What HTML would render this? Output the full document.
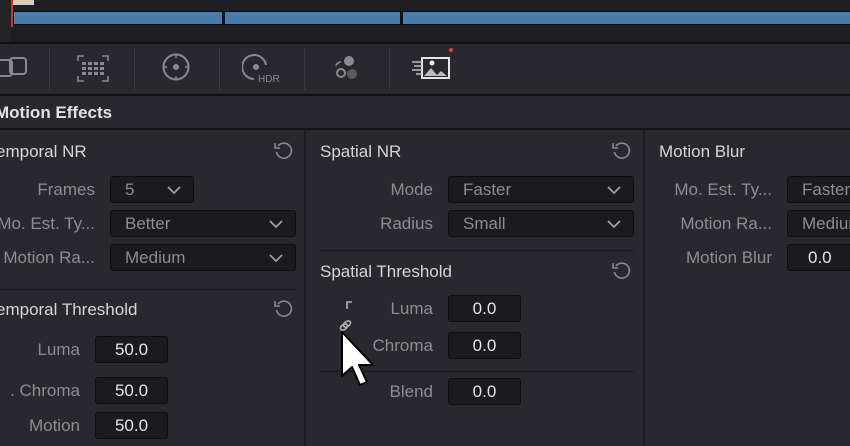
<!DOCTYPE html>
<html><head><meta charset="utf-8"><style>
*{margin:0;padding:0;box-sizing:border-box}
body{width:850px;height:446px;overflow:hidden;background:#28282e;font-family:"Liberation Sans","DejaVu Sans",sans-serif;position:relative}
.a{position:absolute}
.lbl{position:absolute;color:#8d8d91;font-size:17px;text-align:right;white-space:nowrap;line-height:20px}
.ttl{position:absolute;color:#d6d6d8;font-size:17px;white-space:nowrap;line-height:20px}
.box{position:absolute;background:#1b1b1d;border:1px solid #0e0e10;border-radius:3px;color:#8d8d91;font-size:17px;line-height:25px;padding-left:14px;height:27px;white-space:nowrap;overflow:hidden}
.box svg{position:absolute;right:12px;top:9px}
.num{position:absolute;background:#1b1b1d;border:1px solid #0e0e10;border-radius:3px;color:#e4e4e6;font-size:17px;line-height:25px;text-align:center;height:27px}
.sep{position:absolute;height:1px;background:#1a1a1d}
.rst{position:absolute}
</style></head><body>
<!-- timeline -->
<div class="a" style="left:0;top:0;width:850px;height:43px;background:#1e1e22"></div>
<div class="a" style="left:0;top:0;width:11px;height:43px;background:#232327"></div>
<div class="a" style="left:12px;top:0;width:22px;height:5px;background:#d8cfb6"></div>
<div class="a" style="left:13px;top:11px;width:837px;height:14px;background:#111"></div>
<div class="a" style="left:14px;top:12px;width:208px;height:12px;background:#4a7cab"></div>
<div class="a" style="left:225px;top:12px;width:175px;height:12px;background:#4a7cab"></div>
<div class="a" style="left:403px;top:12px;width:447px;height:12px;background:#4a7cab"></div>
<div class="a" style="left:11px;top:0;width:2px;height:27px;background:#c0392b"></div>
<div class="a" style="left:0;top:42px;width:850px;height:2px;background:#111114"></div>
<!-- toolbar -->
<div class="a" style="left:0;top:44px;width:850px;height:50px;background:#28282e"></div>
<div class="a" style="left:49px;top:48px;width:1px;height:42px;background:#3a3a40"></div>
<div class="a" style="left:134px;top:48px;width:1px;height:42px;background:#3a3a40"></div>
<div class="a" style="left:219px;top:48px;width:1px;height:42px;background:#3a3a40"></div>
<div class="a" style="left:304px;top:48px;width:1px;height:42px;background:#3a3a40"></div>
<div class="a" style="left:389px;top:48px;width:1px;height:42px;background:#3a3a40"></div>
<svg class="a" style="left:0;top:50px" width="40" height="34" fill="none" stroke="#8a8a8e" stroke-width="2"><rect x="10" y="8" width="16" height="16" rx="3"/><rect x="-4" y="10" width="16" height="16" rx="3"/></svg>
<svg class="a" style="left:76px;top:54px" width="34" height="30" stroke="#8a8a8e" stroke-width="1.6" fill="none"><path d="M2 7V2h6M26 2h6v5M2 22v5h6M26 27h6v-5"/><g fill="#8a8a8e" stroke="none"><rect x="6" y="8" width="4" height="3"/><rect x="12" y="8" width="4" height="3"/><rect x="18" y="8" width="4" height="3"/><rect x="24" y="8" width="4" height="3"/><rect x="6" y="13" width="4" height="3"/><rect x="12" y="13" width="4" height="3"/><rect x="18" y="13" width="4" height="3"/><rect x="24" y="13" width="4" height="3"/><rect x="6" y="18" width="4" height="3"/><rect x="12" y="18" width="4" height="3"/><rect x="18" y="18" width="4" height="3"/><rect x="24" y="18" width="4" height="3"/></g></svg>
<svg class="a" style="left:161px;top:52px" width="30" height="30" fill="none" stroke="#8a8a8e" stroke-width="2"><circle cx="15" cy="15" r="12.5"/><circle cx="15" cy="15" r="3" fill="#8a8a8e" stroke="none"/><path d="M15 2v4M15 24v4M2 15h4M24 15h4" stroke-width="1.4"/></svg>
<svg class="a" style="left:242px;top:52px" width="42" height="32" fill="none" stroke="#8a8a8e" stroke-width="2"><path d="M24 13A12 12 0 1 0 12 27"/><circle cx="14" cy="15" r="3" fill="#8a8a8e" stroke="none"/><text x="16" y="30" font-size="10" fill="#8a8a8e" stroke="none" font-family="Liberation Sans">HDR</text></svg>
<svg class="a" style="left:330px;top:54px" width="36" height="28"><path d="M6 12a5 5 0 0 1 5-4" fill="none" stroke="#8a8a8e" stroke-width="1.6"/><circle cx="19" cy="7" r="5" fill="#8a8a8e"/><circle cx="11" cy="19" r="4" fill="none" stroke="#8a8a8e" stroke-width="2"/><circle cx="22" cy="20" r="5" fill="#5b5b5f"/></svg>
<svg class="a" style="left:410px;top:48px" width="46" height="36"><circle cx="41" cy="2" r="2" fill="#e0403a"/><rect x="12" y="10" width="27" height="20" fill="none" stroke="#e6e6e6" stroke-width="2"/><path d="M14 28l7-8 6 7 4-4 6 5z" fill="#bdbdbd"/><circle cx="22" cy="15" r="2.5" fill="#fff"/><path d="M2 14h10M4 18h8M2 22h10M6 26h6" stroke="#bdbdbd" stroke-width="1.4"/></svg>
<!-- header -->
<div class="a" style="left:0;top:94px;width:850px;height:2px;background:#111114"></div>
<div class="a" style="left:0;top:96px;width:850px;height:33px;background:#28282e"></div>
<div class="ttl" style="left:-5px;top:103px;font-weight:bold;color:#e2e2e4">Motion Effects</div>
<div class="a" style="left:0;top:128px;width:850px;height:2px;background:#141417"></div>
<!-- column dividers -->
<div class="a" style="left:304px;top:130px;width:2px;height:316px;background:#1c1c20"></div>
<div class="a" style="left:643px;top:130px;width:2px;height:316px;background:#1c1c20"></div>

<!-- reset icon template -->
<svg class="rst" style="left:273px;top:140px" width="20" height="20" fill="none" stroke="#8a8a8e" stroke-width="1.6"><path d="M5 6A7.5 7.5 0 1 1 3.5 12"/><path d="M2 3v5h5"/></svg>
<svg class="rst" style="left:611px;top:140px" width="20" height="20" fill="none" stroke="#8a8a8e" stroke-width="1.6"><path d="M5 6A7.5 7.5 0 1 1 3.5 12"/><path d="M2 3v5h5"/></svg>
<svg class="rst" style="left:611px;top:260px" width="20" height="20" fill="none" stroke="#8a8a8e" stroke-width="1.6"><path d="M5 6A7.5 7.5 0 1 1 3.5 12"/><path d="M2 3v5h5"/></svg>
<svg class="rst" style="left:273px;top:298px" width="20" height="20" fill="none" stroke="#8a8a8e" stroke-width="1.6"><path d="M5 6A7.5 7.5 0 1 1 3.5 12"/><path d="M2 3v5h5"/></svg>

<!-- left column -->
<div class="ttl" style="left:-4px;top:142px">emporal NR</div>
<div class="lbl" style="right:755px;top:180px">Frames</div>
<div class="box" style="left:110px;top:176px;width:84px">5<svg width="14" height="9"><path d="M1 1l6 6 6-6" fill="none" stroke="#a0a0a4" stroke-width="1.8"/></svg></div>
<div class="lbl" style="right:755px;top:214px">Mo. Est. Ty...</div>
<div class="box" style="left:110px;top:210px;width:186px">Better<svg width="14" height="9"><path d="M1 1l6 6 6-6" fill="none" stroke="#a0a0a4" stroke-width="1.8"/></svg></div>
<div class="lbl" style="right:755px;top:248px">Motion Ra...</div>
<div class="box" style="left:110px;top:244px;width:186px">Medium<svg width="14" height="9"><path d="M1 1l6 6 6-6" fill="none" stroke="#a0a0a4" stroke-width="1.8"/></svg></div>
<div class="sep" style="left:0;top:289px;width:296px"></div>
<div class="ttl" style="left:-4px;top:300px">emporal Threshold</div>
<div class="lbl" style="right:770px;top:340px">Luma</div>
<div class="num" style="left:95px;top:336px;width:73px">50.0</div>
<div class="lbl" style="right:770px;top:381px">. Chroma</div>
<div class="num" style="left:95px;top:377px;width:73px">50.0</div>
<div class="lbl" style="right:770px;top:416px">Motion</div>
<div class="num" style="left:95px;top:412px;width:73px">50.0</div>

<!-- middle column -->
<div class="ttl" style="left:320px;top:142px">Spatial NR</div>
<div class="lbl" style="right:417px;top:180px">Mode</div>
<div class="box" style="left:448px;top:176px;width:186px">Faster<svg width="14" height="9"><path d="M1 1l6 6 6-6" fill="none" stroke="#a0a0a4" stroke-width="1.8"/></svg></div>
<div class="lbl" style="right:417px;top:214px">Radius</div>
<div class="box" style="left:448px;top:210px;width:186px">Small<svg width="14" height="9"><path d="M1 1l6 6 6-6" fill="none" stroke="#a0a0a4" stroke-width="1.8"/></svg></div>
<div class="sep" style="left:320px;top:250px;width:314px"></div>
<div class="ttl" style="left:320px;top:262px">Spatial Threshold</div>
<div class="lbl" style="right:417px;top:299px">Luma</div>
<div class="num" style="left:448px;top:295px;width:73px">0.0</div>
<div class="lbl" style="right:417px;top:336px">Chroma</div>
<div class="num" style="left:448px;top:332px;width:73px">0.0</div>
<div class="sep" style="left:320px;top:371px;width:314px"></div>
<div class="lbl" style="right:417px;top:382px">Blend</div>
<div class="num" style="left:448px;top:378px;width:73px">0.0</div>
<svg class="a" style="left:334px;top:300px" width="22" height="34" fill="none" stroke="#b0b0b4" stroke-width="1.6"><path d="M13 9V2h5"/><ellipse cx="10" cy="27" rx="4" ry="2.5" transform="rotate(-35 10 27)"/><ellipse cx="13" cy="24" rx="4" ry="2.5" transform="rotate(-35 13 24)"/></svg>
<svg class="a" style="left:336px;top:328px" width="50" height="66"><path d="M6 4v44l10-9 8 18 7-3-8-17h14z" fill="#fff" stroke="#000" stroke-width="2" stroke-linejoin="round"/></svg>

<!-- right column -->
<div class="ttl" style="left:659px;top:142px">Motion Blur</div>
<div class="lbl" style="right:78px;top:180px">Mo. Est. Ty...</div>
<div class="box" style="left:787px;top:176px;width:80px;padding-left:14px">Faster</div>
<div class="lbl" style="right:78px;top:214px">Motion Ra...</div>
<div class="box" style="left:787px;top:210px;width:80px">Medium</div>
<div class="lbl" style="right:78px;top:248px">Motion Blur</div>
<div class="num" style="left:787px;top:244px;width:80px;text-align:left;padding-left:20px">0.0</div>
</body></html>
